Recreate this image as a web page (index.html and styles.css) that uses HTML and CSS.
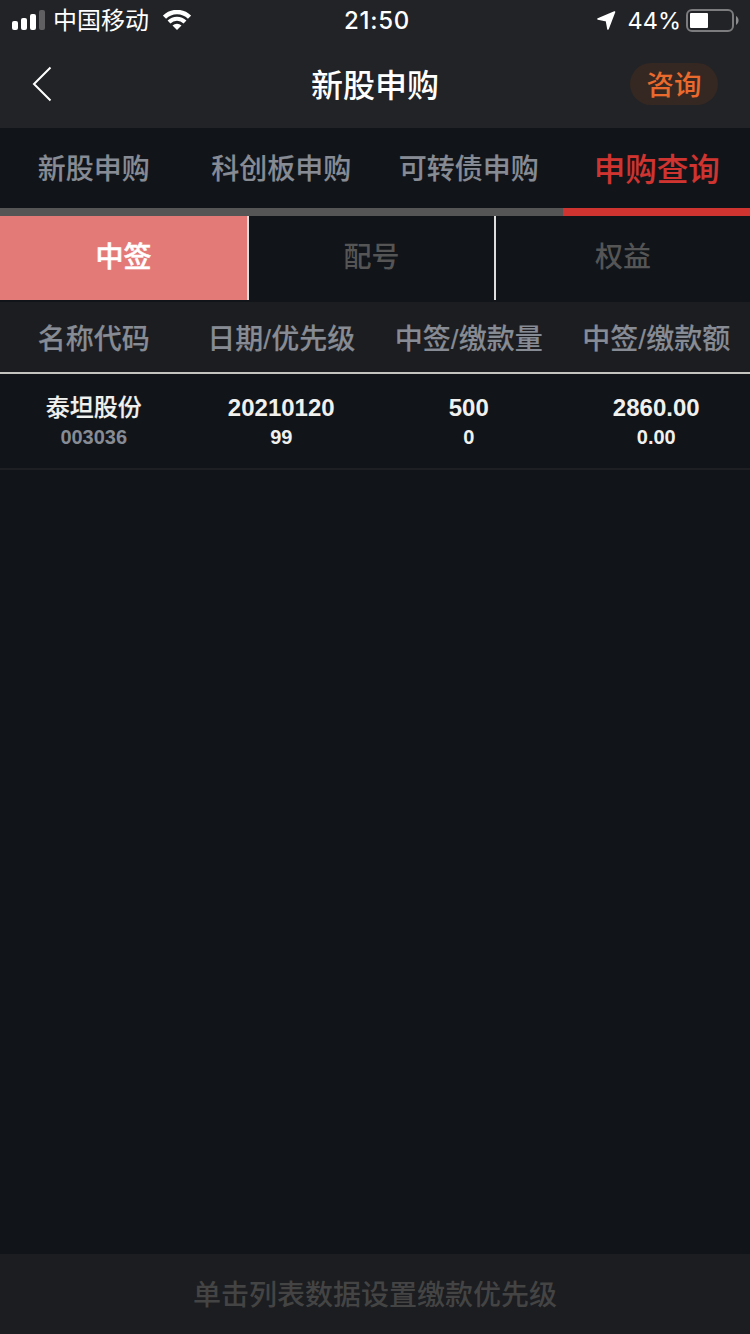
FILE: index.html
```html
<!DOCTYPE html>
<html lang="zh-CN">
<head>
    <meta charset="UTF-8">
    <meta name="viewport" content="width=device-width, initial-scale=1.0">
    <title>新股申购</title>
    <link rel="stylesheet" href="styles.css">
</head>
<body>
    <div class="app">
        <!-- Status bar -->
        <div class="status-bar">
            <div class="status-left">
                <svg class="signal" width="34" height="20" viewBox="0 0 34 20">
                    <rect x="0" y="11" width="6" height="9" rx="2" fill="#fff"/>
                    <rect x="9" y="8" width="6" height="12" rx="2" fill="#fff"/>
                    <rect x="18" y="4" width="6" height="16" rx="2" fill="#fff"/>
                    <rect x="27" y="0" width="6" height="20" rx="2" fill="#606062"/>
                </svg>
                <span class="carrier">中国移动</span>
                <svg class="wifi" width="28" height="20" viewBox="0 0 28 20">
                    <path d="M1.500 7.200a17.600 17.600 0 0 1 25 0" fill="none" stroke="#fff" stroke-width="4.400"/>
                    <path d="M6 12a11.200 11.200 0 0 1 16 0" fill="none" stroke="#fff" stroke-width="4"/>
                    <path d="M14 20l-4.500-4.400a6.400 6.400 0 0 1 9 0z" fill="#fff"/>
                </svg>
            </div>
            <span class="time">21:50</span>
            <div class="status-right">
                <svg class="location" width="19" height="19" viewBox="0 0 19 19">
                    <path d="M17.500 1L1 8l8.500 1.800L11 18z" fill="#fff" stroke="#fff" stroke-width="1.600" stroke-linejoin="round"/>
                </svg>
                <span class="percent">44%</span>
                <svg class="battery" width="54" height="24" viewBox="0 0 54 24">
                    <rect x="1" y="2" width="46" height="21" rx="5" fill="none" stroke="#7c7c7e" stroke-width="2"/>
                    <rect x="4" y="5" width="18" height="15" rx="1" fill="#fff"/>
                    <path d="M50 8c3.400 1.800 3.400 7 0 9z" fill="#8c8c8e"/>
                </svg>
            </div>
        </div>

        <!-- Title bar -->
        <div class="header">
            <svg class="back" width="20" height="36" viewBox="0 0 20 36">
                <path d="M18.500 1.500L2 18l16.500 16.500" fill="none" stroke="#fff" stroke-width="2"/>
            </svg>
            <h1>新股申购</h1>
            <button class="consult">咨询</button>
        </div>

        <!-- Main tabs -->
        <div class="tabs">
            <div class="tab">新股申购</div>
            <div class="tab">科创板申购</div>
            <div class="tab">可转债申购</div>
            <div class="tab active">申购查询</div>
        </div>

        <!-- Sub tabs -->
        <div class="sub-tabs">
            <div class="sub-tab active">中签</div>
            <div class="sub-tab">配号</div>
            <div class="sub-tab">权益</div>
        </div>

        <!-- List -->
        <div class="list-head">
            <div>名称代码</div>
            <div>日期/优先级</div>
            <div>中签/缴款量</div>
            <div>中签/缴款额</div>
        </div>
        <div class="list-row">
            <div class="cell">
                <span class="main">泰坦股份</span>
                <span class="sub code">003036</span>
            </div>
            <div class="cell">
                <span class="main">20210120</span>
                <span class="sub">99</span>
            </div>
            <div class="cell">
                <span class="main">500</span>
                <span class="sub">0</span>
            </div>
            <div class="cell">
                <span class="main">2860.00</span>
                <span class="sub">0.00</span>
            </div>
        </div>

        <div class="footer">单击列表数据设置缴款优先级</div>
    </div>
</body>
</html>
```
FILE: styles.css
```css
* {
    box-sizing: border-box;
}

body {
    margin: 0;
    background: #111419;
    color: #ffffff;
    font-family: "Liberation Sans", "Noto Sans CJK SC", sans-serif;
    font-weight: 500;
}

.app {
    display: flex;
    flex-direction: column;
    height: 1334px;
}

/* Status bar */
.status-bar {
    display: grid;
    grid-template-columns: 1fr auto 1fr;
    align-items: center;
    height: 40px;
    padding: 0 10px 0 12px;
    background: #222326;
    font-family: Inter, "Noto Sans CJK SC", sans-serif;
    line-height: 38px;
}

.status-left,
.status-right {
    display: flex;
    align-items: center;
}

.status-right {
    justify-content: flex-end;
}

.carrier {
    margin: 0 14px 0 7px;
    padding-top: 2px;
    font-size: 24px;
    font-weight: 400;
}

.time {
    padding: 2px 0 0 2px;
    font-size: 24px;
    font-weight: 500;
    letter-spacing: 0.7px;
}

.percent {
    margin: 0 5px 0 12px;
    padding-top: 2px;
    font-size: 23.5px;
    font-weight: 400;
}

/* Title bar */
.header {
    display: grid;
    grid-template-columns: 1fr auto 1fr;
    align-items: center;
    height: 88px;
    padding: 0 32px;
    background: #222326;
}

h1 {
    margin: 0;
    padding-top: 4px;
    font-size: 32px;
    font-weight: 500;
    line-height: 84px;
}

.consult {
    justify-self: end;
    width: 88px;
    height: 42px;
    padding: 3px 0 0;
    border: none;
    border-radius: 21px;
    background: #352822;
    color: #ea692c;
    font-family: inherit;
    font-size: 27.5px;
    font-weight: 500;
    line-height: 38px;
}

/* Main tabs */
.tabs {
    display: grid;
    grid-template-columns: repeat(4, 1fr);
    height: 88px;
}

.tab {
    height: 88px;
    border-bottom: 8px solid #555555;
    color: #868b94;
    font-size: 28px;
    line-height: 84px;
    text-align: center;
    -webkit-text-stroke: 0.15px;
}

.tab.active {
    padding-left: 1px;
    border-color: #d03430;
    color: #d03430;
    font-size: 31.5px;
}

/* Sub tabs */
.sub-tabs {
    display: grid;
    grid-template-columns: 249px 247px 254px;
    height: 84px;
    margin-bottom: 2px;
}

.sub-tab {
    border-right: 2px solid #dddddd;
    color: #555555;
    font-size: 28px;
    line-height: 84px;
    text-align: center;
}

.sub-tab:last-child {
    border-right: none;
}

.sub-tab.active {
    background: #e47a77;
    color: #ffffff;
    -webkit-text-stroke: 0.5px;
}

/* List */
.list-head {
    display: grid;
    grid-template-columns: repeat(4, 1fr);
    height: 72px;
    padding-top: 2px;
    border-bottom: 2px solid #c3c3c0;
    background: #1c1d20;
    color: #868b94;
    font-size: 28px;
    line-height: 72px;
    text-align: center;
    -webkit-text-stroke: 0.15px;
}

.list-row {
    display: grid;
    grid-template-columns: repeat(4, 1fr);
    height: 96px;
    padding-top: 18px;
    border-bottom: 2px solid #1e1f22;
    color: #f0f0ee;
}

.cell {
    display: flex;
    flex-direction: column;
    align-items: center;
    font-weight: 700;
}

.main {
    font-size: 24px;
    line-height: 32px;
}

.cell:first-child .main {
    font-weight: 500;
    -webkit-text-stroke: 0.15px;
}

.sub {
    font-size: 20px;
    line-height: 26px;
}

.code {
    color: #868b94;
}

/* Bottom hint */
.footer {
    height: 80px;
    margin-top: auto;
    background: #1c1d20;
    color: #444444;
    font-size: 28px;
    line-height: 84px;
    text-align: center;
}
```
